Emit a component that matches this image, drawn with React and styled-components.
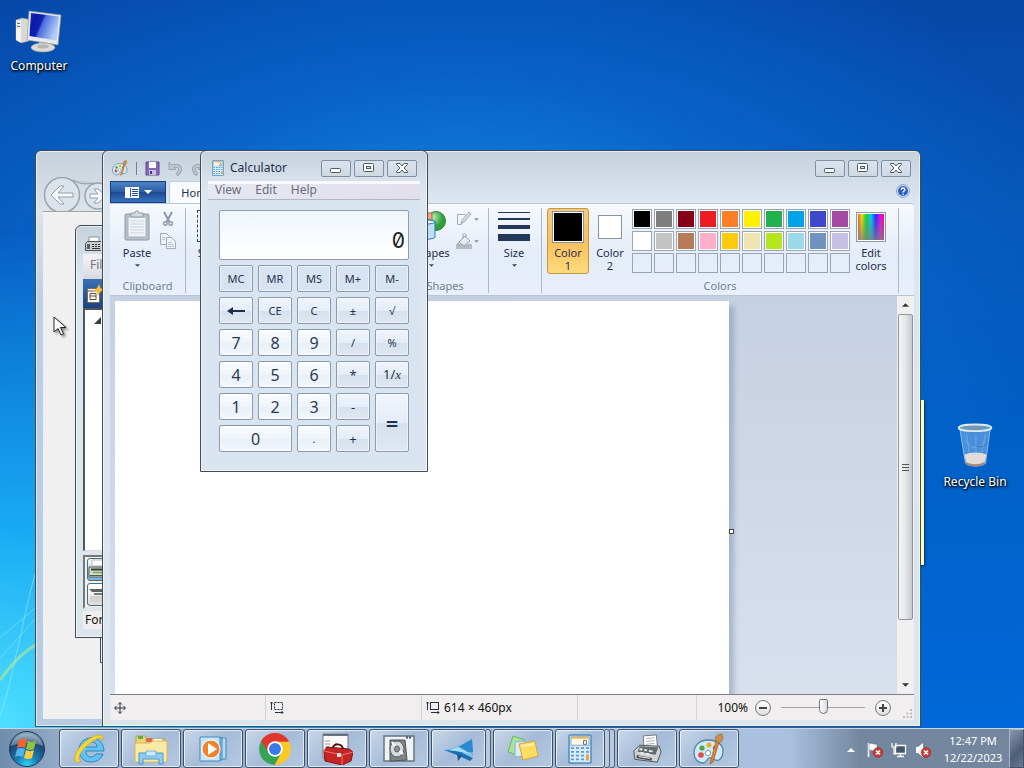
import React from 'react';
import styled, { createGlobalStyle, css } from 'styled-components';

const GlobalStyle = createGlobalStyle`
  * {
    box-sizing: border-box;
  }

  body {
    margin: 0;
    overflow: hidden;
    font-family: 'Noto Sans', 'Open Sans', sans-serif;
    font-size: 11px;
    line-height: 14px;
    color: #1e2f4b;
  }

  button, input {
    padding: 0;
    border: 0;
    background: none;
    color: inherit;
    font: inherit;
  }

  svg {
    display: block;
    flex: none;
  }
`;

const PALETTE = [
  '#000000', '#7f7f7f', '#880015', '#ed1c24', '#ff7f27', '#fff200', '#22b14c', '#00a2e8', '#3f48cc', '#a349a4',
  '#ffffff', '#c3c3c3', '#b97a57', '#ffaec9', '#ffc90e', '#efe4b0', '#b5e61d', '#99d9ea', '#7092be', '#c8bfe7',
  '', '', '', '', '', '', '', '', '', '',
];

const CALC_KEYS = [
  { label: 'MC', kind: 'memory' },
  { label: 'MR', kind: 'memory' },
  { label: 'MS', kind: 'memory' },
  { label: 'M+', kind: 'memory' },
  { label: 'M-', kind: 'memory' },
  { label: '←', kind: 'back' },
  { label: 'CE', kind: 'op' },
  { label: 'C', kind: 'op' },
  { label: '±', kind: 'op' },
  { label: '√', kind: 'op' },
  { label: '7', kind: 'digit' },
  { label: '8', kind: 'digit' },
  { label: '9', kind: 'digit' },
  { label: '/', kind: 'op' },
  { label: '%', kind: 'op' },
  { label: '4', kind: 'digit' },
  { label: '5', kind: 'digit' },
  { label: '6', kind: 'digit' },
  { label: '*', kind: 'sign' },
  { label: '1/x', kind: 'inverse' },
  { label: '1', kind: 'digit' },
  { label: '2', kind: 'digit' },
  { label: '3', kind: 'digit' },
  { label: '-', kind: 'sign' },
  { label: '=', kind: 'equals' },
  { label: '0', kind: 'digit', wide: true },
  { label: '.', kind: 'point' },
  { label: '+', kind: 'sign' },
];

/* ---------- icons ---------- */

function ComputerIcon() {
  return (
    <svg width="48" height="44" viewBox="0 0 48 44">
      <defs>
        <linearGradient id="screen" x1="0" y1="0" x2="1" y2="0.4">
          <stop offset="0" stopColor="#2438d0" />
          <stop offset="0.2" stopColor="#0a18a8" />
          <stop offset="0.45" stopColor="#0f22b4" />
          <stop offset="0.52" stopColor="#4a6ce0" />
          <stop offset="1" stopColor="#b4cdf6" />
        </linearGradient>
      </defs>
      <path d="M1 11l6-2 10 2v20l-10 3-6-3z" fill="#d9dad6" stroke="#8d9299" strokeWidth=".6" />
      <path d="M1 11l5 1v22l-5-3z" fill="#f4f3ee" />
      <path d="M2 14l3 .6M2 17l3 .6" stroke="#555" strokeWidth="1" />
      <path d="M14 2l32 4-3 30-31-5z" fill="#e6e8ea" stroke="#8f979f" strokeWidth=".7" />
      <path d="M16 4l28 3.500-2.500 24-27-4.500z" fill="url(#screen)" />
      <path d="M24 33l9 1v4h-9z" fill="#c3c5c3" />
      <ellipse cx="28" cy="38.500" rx="12" ry="4.500" fill="#dddbd4" stroke="#9a9a96" strokeWidth=".6" />
      <ellipse cx="28" cy="37.500" rx="6" ry="2" fill="#b4b6b4" />
    </svg>
  );
}

function BinIcon() {
  return (
    <svg width="38" height="46" viewBox="0 0 38 48">
      <path d="M3 5l6 37c4 4 17 4 21 0l5-37z" fill="#8fc0f2" fillOpacity=".5" stroke="#b9d8f5" strokeOpacity=".7" />
      <path d="M8 33c6-3 18-3 23 0l-2 9c-4 3-15 3-19 0z" fill="#e2dcd9" />
      <path d="M8.500 40c5 4 17 4 21 0l-1 3c-5 3-14 3-19 0z" fill="#a58673" />
      <path d="M10 11l3 20M20 12v20M30 11l-4 20M8 18l9 8 13-4" stroke="#cfe4fa" strokeOpacity=".3" fill="none" />
      <path d="M20 24c6 2 10-1 13-4" stroke="#2f62a8" strokeOpacity=".7" fill="none" />
      <ellipse cx="19" cy="5" rx="17" ry="3.500" fill="#6f97b8" stroke="#dbeaf2" strokeWidth="2" />
    </svg>
  );
}

function PaletteIcon({ size = 16 }) {
  return (
    <svg width={size} height={size} viewBox="0 0 32 32">
      <path d="M15 7C6 7 1 13 1 20c0 6 4 10 9 10 4 0 3-4 6-5 4-1 6 4 10 2 3-2 4-5 4-9 0-7-7-11-15-11z" fill="#d3e8f7" stroke="#4e84a8" strokeWidth="1.300" />
      <circle cx="8" cy="22" r="2.800" fill="#e54b3c" />
      <circle cx="9" cy="15" r="2.600" fill="#4aa848" />
      <circle cx="16" cy="12" r="2.600" fill="#e7b42c" />
      <circle cx="22" cy="15" r="2.200" fill="#3d7ed2" />
      <circle cx="15" cy="20" r="2.600" fill="#fff" stroke="#6ba0bd" />
      <path d="M26 9l-6 20-3 2 1-4 5-19z" fill="#e6842c" stroke="#a55912" strokeWidth=".7" />
      <path d="M23 8c-2-4 1-7 6-7 2 4 0 8-3 9z" fill="#c98f4d" stroke="#8d6330" strokeWidth=".6" />
    </svg>
  );
}

function SaveIcon() {
  return (
    <svg width="15" height="15" viewBox="0 0 15 15">
      <path d="M1 1h13v13H1z" fill="#8469b4" stroke="#5b4690" />
      <path d="M4 1h7v6H4z" fill="#fff" />
      <path d="M4 9h7v5H4z" fill="#c8bfe0" />
      <path d="M5 10h2v3H5z" fill="#473568" />
    </svg>
  );
}

function UndoIcon({ flip }) {
  return (
    <svg width="15" height="15" viewBox="0 0 15 15">
      <g transform={flip ? 'matrix(-1 0 0 1 15 0)' : undefined}>
        <path d="M4 5.500c5-2 8.500 0 8 3.500-.3 2-1.500 3.500-3.500 4.500" fill="none" stroke="#8f9ba6" strokeWidth="3.600" />
        <path d="M1 1v7.500h7z" fill="#c0c9d1" stroke="#8f9ba6" strokeWidth=".8" />
        <path d="M4 5.500c5-2 8.500 0 8 3.500-.3 2-1.500 3.300-3.200 4.200" fill="none" stroke="#c0c9d1" strokeWidth="2" />
      </g>
    </svg>
  );
}

function MenuPageIcon() {
  return (
    <svg width="14" height="11" viewBox="0 0 14 11">
      <path d="M0 0h14v11H0z" fill="#fff" />
      <path d="M5.500 1v9" stroke="#2a5b9f" />
      <path d="M7 2.500h6M7 4.500h6M7 6.500h6M7 8.500h6" stroke="#1f4c88" />
    </svg>
  );
}

function Triangle({ color = '#33455f', size = 5, up }) {
  return (
    <svg width={size} height={Math.ceil(size / 2)} viewBox="0 0 6 3">
      <path d={up ? 'M0 3h6L3 0z' : 'M0 0h6L3 3z'} fill={color} />
    </svg>
  );
}

function ClipboardIcon() {
  return (
    <svg width="26" height="32" viewBox="0 0 26 32">
      <rect x="1" y="4" width="24" height="26" rx="1" fill="#b7c0ca" stroke="#8f9aa6" />
      <path d="M4 7h18v20H4z" fill="#f0f4f8" stroke="#a6b1bc" />
      <path d="M6 11h14M6 14h14M6 17h14M6 20h14M6 23h14" stroke="#c9d4df" />
      <path d="M7 3h4c0-3 4-3 4 0h4v4H7z" fill="#d3dae1" stroke="#8f9aa6" />
    </svg>
  );
}

function ScissorsIcon() {
  return (
    <svg width="12" height="16" viewBox="0 0 12 16" fill="none" stroke="#8d99a6" strokeWidth="1.400">
      <path d="M2 1l5.500 10M10 1L4.500 11" strokeWidth="2" />
      <circle cx="3.300" cy="12.500" r="1.800" />
      <circle cx="8.700" cy="12.500" r="1.800" />
    </svg>
  );
}

function CopyIcon() {
  return (
    <svg width="16" height="16" viewBox="0 0 16 16" fill="#eef2f7" stroke="#a0acb9">
      <path d="M.5.500h6l3 3v8h-9z" />
      <path d="M6.500 4.500h5l4 4v7h-9z" />
      <path d="M8 9.500h4M8 11.500h6M8 13.500h6M2 4.500h3M2 6.500h3" stroke="#bcc7d3" />
    </svg>
  );
}

function ShapesIcon() {
  return (
    <svg width="32" height="32" viewBox="0 0 32 32">
      <defs>
        <radialGradient id="ball" cx=".35" cy=".3">
          <stop offset="0" stopColor="#b9f0b0" />
          <stop offset="1" stopColor="#2f9e3a" />
        </radialGradient>
      </defs>
      <circle cx="21" cy="11" r="9.500" fill="url(#ball)" stroke="#2c8437" />
      <path d="M3 3h14v12H3z" fill="#f0a583" stroke="#b9694a" />
      <path d="M2 12c0-3 18-3 18 0v15c0 3-18 3-18 0z" fill="#bcdff8" stroke="#2a79bd" />
      <ellipse cx="11" cy="12" rx="9" ry="2" fill="#eef8ff" stroke="#2a79bd" />
    </svg>
  );
}

function OutlineIcon() {
  return (
    <svg width="16" height="16" viewBox="0 0 16 16" fill="none" stroke="#a1adb9">
      <path d="M1.500 3.500h8M1.500 3.500v10h4" />
      <path d="M5 13l1-4 7-8 2 2-7 8z" fill="#d4dbe2" />
    </svg>
  );
}

function FillIcon() {
  return (
    <svg width="16" height="16" viewBox="0 0 16 16">
      <path d="M0 11h16v5H0z" fill="#b2bcc6" />
      <path d="M3 9l6-6 5 5-6 5z" fill="#e6ebf0" stroke="#97a3af" />
      <path d="M7 5V2c0-2 3-2 3 0v3" fill="none" stroke="#97a3af" />
      <path d="M3 9c-2 1-2 4-1 4s1-2 1-4z" fill="#97a3af" />
    </svg>
  );
}

function HelpIcon() {
  return (
    <svg width="14" height="14" viewBox="0 0 14 14">
      <circle cx="7" cy="7" r="6.400" fill="#dce8f8" stroke="#6c8cc0" strokeWidth=".8" />
      <circle cx="7" cy="7" r="5" fill="#2b5fc4" />
      <path d="M5.200 5.700c0-2.300 3.700-2.300 3.700 0C8.900 7 7.100 6.800 7.100 8.400" fill="none" stroke="#fff" strokeWidth="1.300" />
      <circle cx="7.100" cy="10.200" r=".8" fill="#fff" />
    </svg>
  );
}

function CalcIcon({ width = 12, height = 16 }) {
  return (
    <svg width={width} height={height} viewBox="0 0 24 32" preserveAspectRatio="none">
      <rect x="1" y="1" width="22" height="30" rx="1" fill="#d8ebfa" stroke="#4f8dc1" strokeWidth="1.500" />
      <path d="M3 3h18v9H3z" fill="#fffbea" stroke="#7fa8c6" />
      <path d="M3 3h18v2H3z" fill="#f1b44a" />
      <path d="M15.500 7h3v4h-3z" fill="none" stroke="#5a6e82" />
      {[14, 18, 22, 26].map((y) => (
        <path key={y} d={`M3 ${y}h3v2H3zM8 ${y}h3v2H8zM13 ${y}h3v2h-3zM18 ${y}h3v2h-3z`} fill="#5b9ad3" />
      ))}
      <path d="M18 22h3v6h-3z" fill="#eaa63d" />
    </svg>
  );
}

function WindowGlyph({ type }) {
  return (
    <svg width="16" height="12" viewBox="0 0 16 12" fill="#fff" stroke="#4b5866">
      {type === 'min' && <rect x="2.500" y="6.500" width="10" height="4" rx="1" />}
      {type === 'max' && (
        <>
          <rect x="2.500" y="1.500" width="10" height="8" rx="1" />
          <rect x="5.500" y="4.500" width="4" height="2" fill="#dbe4ee" />
        </>
      )}
      {type === 'close' && (
        <path d="M2.500 1.500h3.500L8 4l2-2.500h3.500v1L10 6l3.500 3.500v1H10L8 8l-2 2.500H2.500v-1L6 6 2.500 2.500z" />
      )}
    </svg>
  );
}

function NavArrows() {
  return (
    <svg width="66" height="36" viewBox="0 0 66 36" fill="none" stroke="#939ca6">
      <path d="M30 3c8 5 12 4 28 3" fill="#c3ccd5" />
      <circle cx="19" cy="18" r="17.500" fill="#dce4eb" stroke="#9ba4ad" strokeWidth="1.500" />
      <circle cx="55" cy="19" r="13" fill="#dce4eb" stroke="#9ba4ad" strokeWidth="1.500" />
      <path d="M8 18l9-9h4l-6 7h15v4H15l6 7h-4z" fill="#f7fafc" />
      <path d="M47 17h8l-4-5h4l8 7-8 7h-4l4-5h-8z" fill="#f7fafc" />
    </svg>
  );
}

function FaxIcon({ size = 16 }) {
  return (
    <svg width={size} height={size} viewBox="0 0 32 32">
      <path d="M12 2l14-1 1 12-14 4z" fill="#fff" stroke="#777" />
      <path d="M15 5l9-1M15 8l9-1M15 11l9-1" stroke="#aaa" />
      <path d="M2 18l6-6 21 1 2 6-4 11-24-3z" fill="#cfd3d3" stroke="#4b4f52" />
      <path d="M8 13l20 1-3 8-19-3z" fill="#646a6e" />
      <path d="M8 16l3 .5M13 17l3 .5M18 18l4 .5M9 20l4 1M15 21l4 1" stroke="#e8eeee" strokeWidth="2" />
      <path d="M5 24l16 3" stroke="#454a4d" strokeWidth="3" />
      <path d="M7 24l12 2" stroke="#fff" />
    </svg>
  );
}

function FaxTitleIcon() {
  return (
    <svg width="16" height="16" viewBox="0 0 16 16">
      <path d="M4 1h10v6H4z" fill="#fff" stroke="#8a8f94" />
      <path d="M.5 7.500l2-2h14v9H.5z" fill="#c9cdcf" stroke="#4a4f54" />
      <path d="M2 8h3v5H2z" fill="#5a6064" />
      <path d="M7 8.500h2M10 8.500h2M13 8.500h2M7 10.500h2M10 10.500h2M13 10.500h2M7 12.500h8" stroke="#33383c" strokeWidth="1.200" />
    </svg>
  );
}

function FaxModeIcon() {
  return (
    <svg width="20" height="22" viewBox="0 0 20 22">
      <path d="M4 1h16v6H4z" fill="#fff" stroke="#bbb" />
      <path d="M1 8h19v10H1z" fill="#d7dcc9" stroke="#52585a" />
      <path d="M3 10.500h16" stroke="#333c3a" strokeWidth="2" />
      <path d="M5 13.500h14" stroke="#7fa84f" strokeWidth="1.500" />
      <path d="M2 16.500h17" stroke="#4c5a55" />
    </svg>
  );
}

function NewFaxIcon() {
  return (
    <svg width="18" height="20" viewBox="0 0 18 20">
      <path d="M1.500 4.500h12v14h-12z" fill="#fffdf7" stroke="#7e6c56" />
      <path d="M4 9.500h6v6H4zM4 12h6M2 7h8" fill="none" stroke="#5d4a40" />
      <path d="M13 0l1.500 4L18 6l-4 2-2 4-1-4-4-1 4-3z" fill="#f5bd3a" />
    </svg>
  );
}

function MoveIcon() {
  return (
    <svg width="12" height="12" viewBox="0 0 12 12" fill="none" stroke="#26323f">
      <path d="M6 1v10M1 6h10M4 2.500L6 .5l2 2M4 9.500l2 2 2-2M2.500 4l-2 2 2 2M9.500 4l2 2-2 2" />
    </svg>
  );
}

function SizeStatusIcon({ dashed }) {
  return (
    <svg width="14" height="13" viewBox="0 0 14 13" fill="none" stroke="#26323f">
      <path d="M1.500 9V1M0 2.500L1.500 1 3 2.500M5 11.500h8M11.500 10l1.500 1.500-1.500 1.500" />
      <rect x="4.500" y="1.500" width="8" height="7" strokeDasharray={dashed ? '2 1' : undefined} />
    </svg>
  );
}

function CursorIcon() {
  return (
    <svg width="14" height="20" viewBox="0 0 14 20">
      <path d="M1 1v15l4-3.500L8 19l2.500-1.200-3-6.300H13z" fill="#fff" stroke="#222" strokeLinejoin="round" />
    </svg>
  );
}

function StartOrb() {
  return (
    <svg width="38" height="38" viewBox="0 0 38 38">
      <defs>
        <radialGradient id="orb" cx=".5" cy=".95" r=".9">
          <stop offset="0" stopColor="#2fd4f4" />
          <stop offset=".35" stopColor="#1b79b4" />
          <stop offset=".75" stopColor="#1c456f" />
          <stop offset="1" stopColor="#7e9cb8" />
        </radialGradient>
      </defs>
      <circle cx="19" cy="19" r="17.500" fill="url(#orb)" stroke="#1f3c58" />
      <path d="M3 16a16.500 16.500 0 0132 0c-9-4-22-4-32 0z" fill="#fff" fillOpacity=".3" />
      <path d="M11 10c3-2 6-1 8 0l-2 8c-3-1.500-5-1.500-8 0z" fill="#f0652e" />
      <path d="M20 11c3 1.500 5 1.500 8 0l-2 8c-3 1.500-5 1-8 0z" fill="#8cc63e" />
      <path d="M9 19c3-1.500 5-1.500 8 0l-2 8c-3-1.500-5-1.500-8 0z" fill="#4fb4ea" />
      <path d="M18 20c3 1.500 5 1.500 8 0l-2 8c-3 1.500-5 1-8 0z" fill="#fccc3c" />
    </svg>
  );
}

function BrowserIcon() {
  return (
    <svg width="32" height="32" viewBox="0 0 32 32">
      <path d="M30 21c-2 6-7 8-12 8C11 29 6 24 6 17S11 5 18 5s13 5 13 13H13c0 4 2 6 5 6 2 0 4-1 5-3zM13 14h11c0-3-2-5-5.500-5S13 11 13 14z" fill="#62c3f0" stroke="#1878b5" strokeWidth=".8" fillRule="evenodd" />
      <path d="M3 29C-1 26 4 15 13 8S30 0 30 5c0 1-1 3-1 3 0-3-3-4-7-1C14 11 6 20 6 25c0 2 1 3 2 3-2 1-4 2-5 1z" fill="#f7d43b" stroke="#ca9c16" strokeWidth=".6" />
    </svg>
  );
}

function FolderIcon() {
  return (
    <svg width="34" height="32" viewBox="0 0 34 32">
      <path d="M2 3h9l2 3h18v22H2z" fill="#f0d27a" stroke="#c29f43" />
      <path d="M4 3h5v3H4z" fill="#5bac4b" />
      <path d="M12 5h6v4h-6z" fill="#dd6a4b" />
      <path d="M20 6h8v5h-8z" fill="#fff" />
      <path d="M1 10h15l3-2h14v21H1z" fill="#fbeaa6" stroke="#d8b75f" />
      <path d="M5 20h24v11h-4v-5H9v5H5z" fill="#90cdf0" stroke="#4899cb" />
      <path d="M12 18h10v5H12z" fill="#c8eafb" stroke="#4899cb" strokeWidth=".6" />
    </svg>
  );
}

function MediaIcon() {
  return (
    <svg width="28" height="28" viewBox="0 0 28 28">
      <path d="M8 3h19v21H8z" fill="#b9dcf5" stroke="#4387be" />
      <path d="M5 3h18v22H5z" fill="#8fc3eb" stroke="#4387be" />
      <path d="M1 2h20v24H1z" fill="#c9e5f8" stroke="#4387be" />
      <circle cx="12" cy="14" r="9" fill="#f0822c" stroke="#fff" />
      <path d="M9 8l9 6-9 6z" fill="#fff" />
    </svg>
  );
}

function ChromeIcon() {
  return (
    <svg width="32" height="32" viewBox="0 0 32 32">
      <path d="M16 16L2.200 8A16 16 0 0129.800 8z" fill="#e0382c" />
      <path d="M16 16l13.800-8A16 16 0 0116 32z" fill="#fbc926" />
      <path d="M16 16v16A16 16 0 012.200 8z" fill="#35a352" />
      <path d="M16 8.500h14L22.500 20z" fill="#fbc926" />
      <path d="M9.500 20L2.200 8 16 8.500z" fill="#35a352" />
      <path d="M2.200 8L9.500 20C8 15 11 8.500 16 8.500h14A16 16 0 002.200 8z" fill="#e0382c" />
      <path d="M22.500 19.800L15.500 32H16l-7-12z" fill="#35a352" />
      <circle cx="16" cy="16" r="7.700" fill="#fff" />
      <circle cx="16" cy="16" r="6" fill="#3b78e7" />
    </svg>
  );
}

function ToolboxIcon() {
  return (
    <svg width="32" height="32" viewBox="0 0 32 32">
      <path d="M2 1h25v24H2z" fill="#fafafa" stroke="#777" />
      <path d="M2 1h25v2H2z" fill="#66727d" />
      <path d="M4 8h5M4 11h5M4 14h4" stroke="#999" />
      <path d="M3 18l3-4 22 2 4 3-2 9-9 4L4 28z" fill="#c62525" stroke="#831313" />
      <path d="M3 18l18 4 11-3M21 22v10" fill="none" stroke="#f07467" />
      <path d="M12 15c0-5 9-5 10 1" fill="none" stroke="#4a1010" strokeWidth="2" />
      <path d="M16 20h4v4h-4z" fill="#ddd" />
    </svg>
  );
}

function DiskIcon() {
  return (
    <svg width="32" height="28" viewBox="0 0 32 28">
      <path d="M1 1h30v25H1z" fill="#f0f3f6" stroke="#687480" strokeWidth="1.500" />
      <path d="M23 2.500h2M26 2.500h2" stroke="#44506a" strokeWidth="2" />
      <path d="M7 5h15l2 20-17 1z" fill="#7d8486" stroke="#4f5558" />
      <ellipse cx="14" cy="14" rx="7" ry="8" fill="#d7dbdc" stroke="#555b5e" />
      <path d="M14 14L9 7M14 14l6 5" stroke="#fff" strokeWidth="2" />
      <ellipse cx="14" cy="14" rx="2.500" ry="3" fill="#8e9598" stroke="#5a6063" />
    </svg>
  );
}

function BirdIcon() {
  return (
    <svg width="32" height="28" viewBox="0 0 32 28">
      <path d="M1 15l14-3L29 4l1 17-15-4z" fill="#63b6ed" />
      <path d="M15 12L29 4l1 13-12 1z" fill="#2b8ad2" />
      <path d="M1 15l14 1 15 7-3 3-13-6z" fill="#1c6fb4" />
      <path d="M6 15l10-3 14 8-12-3z" fill="#a6dcfa" />
      <path d="M14 19l5 2-4 5z" fill="#165997" />
    </svg>
  );
}

function NotesIcon() {
  return (
    <svg width="32" height="28" viewBox="0 0 32 28">
      <path d="M6 1l12 4-5 16-12-4z" fill="#a8e39a" stroke="#6cb45d" />
      <path d="M8 7l10-1 2 15-12 1z" fill="#d9ecfb" stroke="#8cb0cd" />
      <path d="M12 9l16-3 3 15-15 4z" fill="#ffdc62" stroke="#d9a63a" />
      <path d="M14 11l13-2" stroke="#fff0ae" strokeWidth="2" />
    </svg>
  );
}

function TrayFlag() {
  return (
    <svg width="16" height="16" viewBox="0 0 16 16">
      <path d="M1.500 1v14" stroke="#fff" strokeWidth="1.500" />
      <path d="M2 2c3-2 4 1 8 0v7c-4 1-5-2-8 0z" fill="#fff" stroke="#5b6775" strokeWidth=".5" />
      <circle cx="11" cy="10.500" r="4.800" fill="#d23a35" stroke="#8a2222" strokeWidth=".6" />
      <path d="M9 8.500l4 4M13 8.500l-4 4" stroke="#fff" strokeWidth="1.500" />
    </svg>
  );
}

function TrayNetwork() {
  return (
    <svg width="16" height="16" viewBox="0 0 16 16">
      <path d="M4.500 3.500h10v8h-10z" fill="#45576a" stroke="#fff" strokeWidth="1.300" />
      <path d="M9.500 12v2M6 14.500h7" stroke="#fff" strokeWidth="1.500" />
      <path d="M1 1v4h4V1M3 5v7h2" fill="none" stroke="#fff" strokeWidth="1.200" />
    </svg>
  );
}

function TraySound() {
  return (
    <svg width="16" height="16" viewBox="0 0 16 16">
      <path d="M1 5h2l5-4v14l-5-4H1z" fill="#fff" />
      <circle cx="11" cy="10.500" r="4.800" fill="#d23a35" stroke="#8a2222" strokeWidth=".6" />
      <path d="M9 8.500l4 4M13 8.500l-4 4" stroke="#fff" strokeWidth="1.500" />
    </svg>
  );
}

/* ---------- desktop ---------- */

function Shortcut({ label, children, ...rest }) {
  return (
    <Styled.Shortcut {...rest}>
      {children}
      {label}
    </Styled.Shortcut>
  );
}

function WindowButtons() {
  return (
    <Styled.WindowButtons>
      <Styled.WindowButton aria-label="Minimize"><WindowGlyph type="min" /></Styled.WindowButton>
      <Styled.WindowButton aria-label="Maximize"><WindowGlyph type="max" /></Styled.WindowButton>
      <Styled.WindowButton aria-label="Close"><WindowGlyph type="close" /></Styled.WindowButton>
    </Styled.WindowButtons>
  );
}

function BrowserWindow() {
  return (
    <Styled.BrowserWindow>
      <Styled.BrowserNav><NavArrows /></Styled.BrowserNav>
      <Styled.BrowserPage />
    </Styled.BrowserWindow>
  );
}

function FaxWindow() {
  return (
    <Styled.FaxWindow>
      <Styled.FaxTitle><FaxTitleIcon /></Styled.FaxTitle>
      <Styled.FaxMenu>File</Styled.FaxMenu>
      <Styled.FaxToolbar><NewFaxIcon /></Styled.FaxToolbar>
      <Styled.FaxTree>
        <svg width="7" height="7" viewBox="0 0 7 7"><path d="M7 0v7H0z" fill="#3b3b3b" /></svg>
      </Styled.FaxTree>
      <Styled.FaxModes>
        <Styled.FaxMode $active aria-label="Fax"><FaxModeIcon /></Styled.FaxMode>
        <Styled.FaxMode aria-label="Scan">
          <svg width="20" height="18" viewBox="0 0 20 18">
            <path d="M1 3h19v3H4z" fill="#5d6466" />
            <path d="M2 10h18v6H2z" fill="#d3d3cf" />
            <path d="M6 8h14" stroke="#777" strokeWidth="2" />
          </svg>
        </Styled.FaxMode>
      </Styled.FaxModes>
      <Styled.FaxStatus>For Help</Styled.FaxStatus>
    </Styled.FaxWindow>
  );
}

function PaintRibbon() {
  return (
    <Styled.Ribbon>
      <Styled.Group $width={76}>
        <Styled.GroupBody>
          <Styled.BigButton $width={44}>
            <ClipboardIcon />
            <span>Paste</span>
            <Triangle />
          </Styled.BigButton>
          <Styled.SmallColumn>
            <ScissorsIcon />
            <CopyIcon />
          </Styled.SmallColumn>
        </Styled.GroupBody>
        <Styled.GroupLabel>Clipboard</Styled.GroupLabel>
      </Styled.Group>
      <Styled.Group $width={216}>
        <Styled.GroupBody>
          <Styled.BigButton $width={44}>
            <Styled.Marquee />
            <span>Select</span>
          </Styled.BigButton>
        </Styled.GroupBody>
      </Styled.Group>
      <Styled.Group $width={87}>
        <Styled.GroupBody>
          <Styled.BigButton $width={48}>
            <ShapesIcon />
            <span>Shapes</span>
            <Triangle />
          </Styled.BigButton>
          <Styled.SmallColumn>
            <Styled.MenuIcon><OutlineIcon /><Triangle color="#8794a2" /></Styled.MenuIcon>
            <Styled.MenuIcon><FillIcon /><Triangle color="#8794a2" /></Styled.MenuIcon>
          </Styled.SmallColumn>
        </Styled.GroupBody>
        <Styled.GroupLabel>Shapes</Styled.GroupLabel>
      </Styled.Group>
      <Styled.Group $width={53}>
        <Styled.GroupBody>
          <Styled.BigButton $width={40}>
            <Styled.Lines><i /><i /><i /><i /></Styled.Lines>
            <span>Size</span>
            <Triangle />
          </Styled.BigButton>
        </Styled.GroupBody>
      </Styled.Group>
      <Styled.Group $width={357}>
        <Styled.GroupBody>
          <Styled.ColorButton $active>
            <Styled.ColorBox $size={32} $color="#000" />
            <span>Color<br />1</span>
          </Styled.ColorButton>
          <Styled.ColorButton>
            <Styled.ColorBox $size={24} $color="#fff" />
            <span>Color<br />2</span>
          </Styled.ColorButton>
          <Styled.Palette>
            {PALETTE.map((color, i) => (
              <Styled.Swatch key={i} $color={color} aria-label={color || 'Custom color'} />
            ))}
          </Styled.Palette>
          <Styled.ColorButton>
            <Styled.Spectrum />
            <span>Edit<br />colors</span>
          </Styled.ColorButton>
        </Styled.GroupBody>
        <Styled.GroupLabel>Colors</Styled.GroupLabel>
      </Styled.Group>
    </Styled.Ribbon>
  );
}

function PaintWindow() {
  return (
    <Styled.PaintWindow>
      <Styled.PaintTitle>
        <PaletteIcon />
        <Styled.Divider />
        <SaveIcon />
        <UndoIcon />
        <UndoIcon flip />
        <WindowButtons />
      </Styled.PaintTitle>
      <Styled.Tabs>
        <Styled.FileTab aria-label="Paint menu">
          <MenuPageIcon />
          <Triangle color="#fff" size={8} />
        </Styled.FileTab>
        <Styled.Tab>Home</Styled.Tab>
        <Styled.HelpButton aria-label="Help"><HelpIcon /></Styled.HelpButton>
      </Styled.Tabs>
      <PaintRibbon />
      <Styled.Workspace>
        <Styled.Canvas>
          <Styled.Paper />
          <Styled.Handle />
        </Styled.Canvas>
        <Styled.Scrollbar>
          <Styled.ScrollArrow aria-label="Scroll up"><Triangle color="#333" size={7} up /></Styled.ScrollArrow>
          <Styled.ScrollThumb><i /><i /><i /></Styled.ScrollThumb>
          <Styled.ScrollArrow aria-label="Scroll down"><Triangle color="#333" size={7} /></Styled.ScrollArrow>
        </Styled.Scrollbar>
      </Styled.Workspace>
      <Styled.StatusBar>
        <Styled.StatusCell $width={156}><MoveIcon /></Styled.StatusCell>
        <Styled.StatusCell $width={156}><SizeStatusIcon dashed /></Styled.StatusCell>
        <Styled.StatusCell $width={156}><SizeStatusIcon />614 × 460px</Styled.StatusCell>
        <Styled.StatusCell />
        <Styled.ZoomBar>
          <label htmlFor="zoom">100%</label>
          <Styled.ZoomButton aria-label="Zoom out">
            <svg width="8" height="8" viewBox="0 0 8 8"><path d="M0 4h8" stroke="#444" strokeWidth="2" /></svg>
          </Styled.ZoomButton>
          <Styled.Slider id="zoom" type="range" min="0" max="100" defaultValue="50" />
          <Styled.ZoomButton aria-label="Zoom in">
            <svg width="8" height="8" viewBox="0 0 8 8"><path d="M0 4h8M4 0v8" stroke="#444" strokeWidth="2" /></svg>
          </Styled.ZoomButton>
          <Styled.Grip width="9" height="9" viewBox="0 0 9 9">
            <path d="M7 0h2v2H7zM7 3.500h2v2H7zM3.500 3.500h2v2h-2zM7 7h2v2H7zM3.500 7h2v2h-2zM0 7h2v2H0z" fill="#bdbdbd" />
          </Styled.Grip>
        </Styled.ZoomBar>
      </Styled.StatusBar>
    </Styled.PaintWindow>
  );
}

function CalcKey({ item }) {
  const { label, kind, wide } = item;
  let face = label;

  if (kind === 'back') {
    face = (
      <svg width="18" height="10" viewBox="0 0 18 10">
        <path d="M0 5l6-4v3h12v2H6v3z" fill="#1e2f4b" />
      </svg>
    );
  }
  if (kind === 'inverse') {
    face = <span>1/<em>x</em></span>;
  }

  return (
    <Styled.Key $kind={kind} $wide={wide} aria-label={kind === 'back' ? 'Backspace' : undefined}>
      {face}
    </Styled.Key>
  );
}

function CalculatorWindow() {
  return (
    <Styled.CalcWindow>
      <Styled.CalcTitle>
        <CalcIcon />
        <span>Calculator</span>
        <WindowButtons />
      </Styled.CalcTitle>
      <Styled.CalcMenu>
        <button>View</button>
        <button>Edit</button>
        <button>Help</button>
      </Styled.CalcMenu>
      <Styled.CalcBody>
        <Styled.Display aria-label="Result" readOnly value="0" />
        <Styled.Keys>
          {CALC_KEYS.map((item) => <CalcKey key={item.label} item={item} />)}
        </Styled.Keys>
      </Styled.CalcBody>
    </Styled.CalcWindow>
  );
}

function Taskbar() {
  return (
    <Styled.Taskbar>
      <Styled.StartButton aria-label="Start"><StartOrb /></Styled.StartButton>
      <Styled.Tasks>
        <Styled.Task aria-label="Internet Explorer"><BrowserIcon /></Styled.Task>
        <Styled.Task aria-label="Explorer"><FolderIcon /></Styled.Task>
        <Styled.Task aria-label="Media Player"><MediaIcon /></Styled.Task>
        <Styled.Task aria-label="Chrome"><ChromeIcon /></Styled.Task>
        <Styled.Task aria-label="Toolbox"><ToolboxIcon /></Styled.Task>
        <Styled.Task aria-label="Disk image"><DiskIcon /></Styled.Task>
        <Styled.Stack>
          <Styled.Task aria-label="Messenger"><BirdIcon /></Styled.Task>
          <Styled.StackEdge />
        </Styled.Stack>
        <Styled.Task aria-label="Sticky Notes"><NotesIcon /></Styled.Task>
        <Styled.Stack>
          <Styled.Task aria-label="Calculator"><CalcIcon width={24} height={30} /></Styled.Task>
          <Styled.StackEdge />
          <Styled.StackEdge />
        </Styled.Stack>
        <Styled.Task aria-label="Fax and Scan"><FaxIcon size={30} /></Styled.Task>
        <Styled.Task aria-label="Paint"><PaletteIcon size={32} /></Styled.Task>
      </Styled.Tasks>
      <Styled.Tray>
        <Triangle color="#fff" size={8} up />
        <TrayFlag />
        <TrayNetwork />
        <TraySound />
      </Styled.Tray>
      <Styled.Clock>
        <span>12:47 PM</span>
        <span>12/22/2023</span>
      </Styled.Clock>
      <Styled.ShowDesktop aria-label="Show desktop" />
    </Styled.Taskbar>
  );
}

function App() {
  return (
    <Styled.Screen>
      <GlobalStyle />
      <Styled.Desktop>
        <Styled.Rays viewBox="0 0 40 240" width="40" height="240">
          <path d="M0 228C14 190 26 110 40 70" stroke="#a5f4ff" strokeOpacity=".5" fill="none" />
          <path d="M0 150l40-34M0 170l40-44" stroke="#a5f4ff" strokeOpacity=".45" fill="none" />
          <path d="M0 192C16 170 28 160 40 155" stroke="#b8e986" strokeWidth="3" strokeOpacity=".6" fill="none" />
        </Styled.Rays>
        <Shortcut label="Computer" $left={0} $top={9}><ComputerIcon /></Shortcut>
        <Shortcut label="Recycle Bin" $right={10} $top={423}><BinIcon /></Shortcut>
        <BrowserWindow />
        <Styled.BackWindow />
        <FaxWindow />
        <Styled.StickyNote />
        <PaintWindow />
        <CalculatorWindow />
        <Styled.Cursor><CursorIcon /></Styled.Cursor>
      </Styled.Desktop>
      <Taskbar />
    </Styled.Screen>
  );
}

const frame = css`
  position: absolute;
  display: flex;
  flex-direction: column;
  border: 1px solid #3f4a56;
  border-radius: 6px 6px 0 0;
  background: linear-gradient(#c5d1dc, #dce6f0 50px, #dbe5ee);
  box-shadow: inset 0 0 0 1px rgba(255, 255, 255, 0.6);
  overflow: hidden;
`;

const Styled = {
  Screen: styled.div`
    display: flex;
    flex-direction: column;
    height: 100vh;
  `,

  Desktop: styled.main`
    position: relative;
    flex: 1;
    min-height: 0;
    overflow: hidden;
    background:
      radial-gradient(ellipse 50% 68% at 0% 100%, #4fe0ff 0%, rgba(28, 178, 248, 0.9) 40%, rgba(0, 110, 220, 0) 100%),
      radial-gradient(ellipse 60% 50% at 45% 35%, #1288e4 0%, rgba(10, 110, 215, 0.6) 50%, rgba(0, 90, 190, 0) 100%),
      linear-gradient(#0548a8 0%, #0656b6 30%, #0060c6 60%, #0068da 100%);
  `,

  Rays: styled.svg`
    position: absolute;
    left: 0;
    bottom: 0;
  `,

  Shortcut: styled.button`
    position: absolute;
    top: ${({ $top }) => $top}px;
    ${({ $left }) => $left !== undefined && `left: ${$left}px;`}
    ${({ $right }) => $right !== undefined && `right: ${$right}px;`}
    display: flex;
    flex-direction: column;
    align-items: center;
    gap: 6px;
    width: 78px;
    font-size: 12px;
    color: #fff;
    text-shadow: 1px 1px 2px #000, 0 1px 3px #000;
  `,

  BrowserWindow: styled.section`
    ${frame}
    top: 150px;
    left: 35px;
    right: 120px;
    bottom: 1px;
    padding: 0 7px 7px;
    background: linear-gradient(#c5d1dc, #dce4ea 60px, #bccfe8 150px, #b8cbe4);
  `,

  BrowserNav: styled.div`
    height: 61px;
    padding: 26px 0 0;
    border-bottom: 1px solid #9da5ad;
    overflow: hidden;
  `,

  BrowserPage: styled.div`
    flex: 1;
    background: #f0f0f0;
  `,

  BackWindow: styled.div`
    ${frame}
    top: 300px;
    left: 100px;
    width: 300px;
    height: 363px;
  `,

  FaxWindow: styled.section`
    ${frame}
    top: 225px;
    left: 75px;
    width: 500px;
    height: 413px;
    padding: 0 8px 8px 7px;
    font-size: 12px;
  `,

  FaxTitle: styled.header`
    display: flex;
    align-items: end;
    height: 28px;
    padding: 0 0 2px 2px;
  `,

  FaxMenu: styled.div`
    height: 25px;
    padding: 4px 7px;
    background: linear-gradient(#f4f4f8, #d8d8e2);
    color: #777;
  `,

  FaxToolbar: styled.div`
    display: flex;
    align-items: center;
    height: 29px;
    padding: 0 3px;
    background: linear-gradient(#3b6fb4, #1b4285);
  `,

  FaxTree: styled.div`
    flex: 1;
    padding: 7px 9px;
    border: 2px solid #555;
    border-right: 0;
    border-bottom: 1px solid #ddd;
    background: #fff;
  `,

  FaxModes: styled.div`
    display: flex;
    flex-direction: column;
    gap: 2px;
    height: 54px;
    margin: 4px 0 2px;
    padding: 1px 2px;
    border: 2px solid #777;
    border-bottom-color: #e4e4e4;
    background: #f0f0f0;
  `,

  FaxMode: styled.button`
    height: 23px;
    border: 1px solid #44707f;
    border-radius: 3px;
    background: ${({ $active }) => ($active ? 'linear-gradient(#fff, #6fb4dc)' : 'linear-gradient(#fff, #dcdcdc)')};
    overflow: hidden;
  `,

  FaxStatus: styled.footer`
    height: 18px;
    padding: 2px;
    background: #f0eeee;
    color: #111;
  `,

  StickyNote: styled.div`
    position: absolute;
    top: 400px;
    right: 100px;
    width: 160px;
    height: 165px;
    background: #fdfcb4;
    box-shadow: 1px 1px 2px rgba(0, 0, 0, 0.5);
  `,

  PaintWindow: styled.section`
    ${frame}
    top: 150px;
    left: 102px;
    right: 103px;
    bottom: 1px;
    padding: 0 6px 6px 7px;
  `,

  PaintTitle: styled.header`
    display: flex;
    align-items: center;
    gap: 8px;
    height: 30px;
    padding: 4px 3px 0 2px;
  `,

  Divider: styled.span`
    width: 1px;
    height: 13px;
    background: #75808c;
  `,

  WindowButtons: styled.div`
    display: flex;
    gap: 3px;
    margin-left: auto;
  `,

  WindowButton: styled.button`
    display: flex;
    align-items: center;
    justify-content: center;
    width: 30px;
    height: 17px;
    border: 1px solid #8190a0;
    border-radius: 2px;
    background: linear-gradient(#dbe3ec, #ced9e4);
  `,

  Tabs: styled.nav`
    display: flex;
    height: 22px;
  `,

  FileTab: styled.button`
    display: flex;
    align-items: center;
    justify-content: center;
    gap: 5px;
    width: 56px;
    border: 1px solid #163f80;
    background: linear-gradient(#4d84c4, #2a5ca4 50%, #1c4890 51%, #3574c0);
  `,

  Tab: styled.button`
    width: 56px;
    margin-left: 3px;
    border: 1px solid #c2cede;
    border-bottom: 0;
    border-radius: 3px 3px 0 0;
    background: #f8fbff;
  `,

  HelpButton: styled.button`
    margin: 0 4px 3px auto;
  `,

  Ribbon: styled.div`
    display: flex;
    height: 93px;
    padding: 4px 0 2px;
    border: 1px solid #b8c6d8;
    border-width: 1px 0;
    border-radius: 0 3px 0 0;
    background: linear-gradient(#f6f9fd, #e4ecf8 60%, #e9f0fb);
  `,

  Group: styled.div`
    display: flex;
    flex-direction: column;
    flex: none;
    width: ${({ $width }) => $width}px;
    border-right: 1px solid #aab8c8;
  `,

  GroupBody: styled.div`
    display: flex;
    align-items: flex-start;
    flex: 1;
    padding-left: 5px;
  `,

  GroupLabel: styled.div`
    color: #717f90;
    text-align: center;
  `,

  BigButton: styled.button`
    display: flex;
    flex-direction: column;
    align-items: center;
    gap: 4px;
    width: ${({ $width }) => $width}px;
    padding-top: 2px;
  `,

  SmallColumn: styled.div`
    display: flex;
    flex-direction: column;
    align-items: center;
    gap: 6px;
    padding: 3px 1px;
  `,

  MenuIcon: styled.span`
    display: flex;
    align-items: center;
    gap: 2px;
  `,

  Marquee: styled.span`
    width: 32px;
    height: 32px;
    border: 1px dashed #33455f;
  `,

  Lines: styled.span`
    display: flex;
    flex-direction: column;
    gap: 5px;
    width: 32px;
    height: 32px;
    padding-top: 2px;

    i {
      height: 1px;
      background: #22375a;
    }

    i:nth-child(2) {
      height: 2px;
    }

    i:nth-child(3) {
      height: 4px;
    }

    i:nth-child(4) {
      height: 7px;
    }
  `,

  ColorButton: styled.button`
    display: flex;
    flex-direction: column;
    align-items: center;
    justify-content: space-between;
    width: 42px;
    height: 66px;
    padding: 2px 0 1px;
    border: 1px solid transparent;
    border-radius: 3px;
    line-height: 13px;
    ${({ $active }) => $active && `
      border-color: #c29b3c;
      background: linear-gradient(#f8c981, #fac05c 50%, #fdda7e);
    `}
  `,

  ColorBox: styled.span`
    width: ${({ $size }) => $size}px;
    height: ${({ $size }) => $size}px;
    margin: ${({ $size }) => (32 - $size) / 2}px 0;
    border: 1px solid #8793a0;
    background: ${({ $color }) => $color};
    box-shadow: inset 0 0 0 1px #fff;
  `,

  Palette: styled.div`
    display: grid;
    grid-template-columns: repeat(10, 20px);
    gap: 2px;
    padding: 1px 0 0 1px;
  `,

  Swatch: styled.button`
    height: 20px;
    border: 1px solid #99a5b2;
    background: ${({ $color }) => $color || 'transparent'};
    ${({ $color }) => $color && 'box-shadow: inset 0 0 0 1px #fff;'}
  `,

  Spectrum: styled.span`
    width: 30px;
    height: 30px;
    margin-top: 1px;
    border: 1px solid #8c97a3;
    background:
      linear-gradient(rgba(128, 128, 128, 0), rgba(128, 128, 128, 0.8)),
      linear-gradient(90deg, #f33, #fd0, #0d3, #0cf, #22f, #e0f, #f04);
    box-shadow: inset 0 0 0 1px #fff;
  `,

  Workspace: styled.div`
    display: flex;
    flex: 1;
    min-height: 0;
  `,

  Canvas: styled.div`
    display: flex;
    flex: 1;
    align-items: flex-start;
    padding: 5px 5px 0;
    background: linear-gradient(#c5d0e2, #d7e0ed);
    overflow: hidden;
  `,

  Paper: styled.div`
    width: 614px;
    height: 460px;
    background: #fff;
    box-shadow: 5px 5px 5px rgba(90, 110, 145, 0.35);
  `,

  Handle: styled.span`
    width: 5px;
    height: 5px;
    margin-top: 228px;
    border: 1px solid #444;
    background: #fff;
  `,

  Scrollbar: styled.div`
    display: flex;
    flex-direction: column;
    width: 17px;
    background: #f0f0f0;
  `,

  ScrollArrow: styled.button`
    display: flex;
    align-items: center;
    justify-content: center;
    height: 18px;
  `,

  ScrollThumb: styled.div`
    display: flex;
    flex-direction: column;
    align-items: center;
    justify-content: center;
    gap: 2px;
    height: 77%;
    margin: 0 1px auto;
    border: 1px solid #92969b;
    border-radius: 2px;
    background: linear-gradient(90deg, #f6f6f6, #e6e6e8 50%, #c6c8cb);

    i {
      width: 7px;
      height: 1px;
      background: #555;
    }
  `,

  StatusBar: styled.footer`
    display: flex;
    height: 26px;
    border-top: 1px solid #7c7f85;
    background: #f0eeee;
    font-size: 12px;
    color: #111;
  `,

  StatusCell: styled.div`
    display: flex;
    align-items: center;
    gap: 4px;
    ${({ $width }) => ($width ? `width: ${$width}px;` : 'flex: 1;')}
    padding-left: 4px;
    border-right: 1px solid #d4d2d4;
  `,

  ZoomBar: styled.div`
    display: flex;
    align-items: center;
    gap: 7px;
    padding-left: 20px;
  `,

  ZoomButton: styled.button`
    display: flex;
    align-items: center;
    justify-content: center;
    width: 16px;
    height: 16px;
    border: 1px solid #777;
    border-radius: 50%;
    background: linear-gradient(#fff, #dedede);
  `,

  Slider: styled.input`
    width: 84px;
    height: 16px;
    margin: 0 3px;
    appearance: none;

    &::-webkit-slider-runnable-track {
      height: 1px;
      background: #a5a5a5;
    }

    &::-webkit-slider-thumb {
      appearance: none;
      width: 9px;
      height: 15px;
      margin-top: -8px;
      border: 1px solid #6f757b;
      border-radius: 2px 2px 5px 5px;
      background: linear-gradient(90deg, #fff, #d8dadc);
    }
  `,

  Grip: styled.svg`
    align-self: flex-end;
    margin: 0 2px 2px 5px;
  `,

  CalcWindow: styled.section`
    ${frame}
    top: 150px;
    left: 200px;
    width: 228px;
    padding: 0 7px 8px;
    background: linear-gradient(#c5d1dc, #dce6f0 40px, #dbe5ee);
  `,

  CalcTitle: styled.header`
    display: flex;
    align-items: center;
    gap: 6px;
    height: 30px;
    padding: 4px 3px 0 4px;
    font-size: 12px;
  `,

  CalcMenu: styled.nav`
    display: flex;
    gap: 14px;
    height: 19px;
    padding: 0 7px 3px;
    border-top: 3px solid #f7f9fc;
    border-bottom: 1px solid #b3b7c4;
    background: linear-gradient(90deg, #e4e8f2, #e2dfea);
    color: #6d6d78;
    font-size: 12px;
    line-height: 12px;
  `,

  CalcBody: styled.div`
    display: flex;
    flex-direction: column;
    gap: 5px;
    padding: 10px 11px 11px;
    background: #d9e4f1;
  `,

  Display: styled.input`
    width: 100%;
    height: 50px;
    padding: 10px 3px 0;
    border: 1px solid #8e9cad;
    border-radius: 2px;
    background: linear-gradient(#eff5fd, #fff);
    color: #1e1e1e;
    font-family: Inter, 'DejaVu Sans Mono', sans-serif;
    font-feature-settings: 'zero';
    font-size: 21px;
    text-align: right;
  `,

  Keys: styled.div`
    display: grid;
    grid-template-columns: repeat(5, 1fr);
    grid-auto-rows: 27px;
    gap: 5px;
  `,

  Key: styled.button`
    display: flex;
    align-items: center;
    justify-content: center;
    border: 1px solid #8a9bb0;
    border-radius: 2px;
    background: linear-gradient(#f0f5fc, #e4edf8 50%, #d5e0ec 51%, #dfe8f2);
    box-shadow: inset 0 0 0 1px rgba(255, 255, 255, 0.5);
    color: #1e3250;
    font-size: 11px;
    ${({ $wide }) => $wide && 'grid-column: span 2;'}
    ${({ $kind }) => $kind === 'memory' && `
      background: #d7e3f1;
    `}
    ${({ $kind }) => ($kind === 'digit' || $kind === 'point') && `
      background: linear-gradient(#fbfdff, #eef4fb 50%, #e8eff8 51%, #f3f8fd);
    `}
    ${({ $kind }) => $kind === 'digit' && `
      color: #2c3a50;
      font-size: 16px;
    `}
    ${({ $kind }) => ($kind === 'sign' || $kind === 'inverse') && `
      font-size: 13px;
    `}
    ${({ $kind }) => $kind === 'equals' && `
      grid-row: span 2;
      font-size: 22px;
      font-weight: 600;
    `}

    em {
      font-family: 'Liberation Serif', serif;
    }
  `,

  Cursor: styled.div`
    position: absolute;
    top: 316px;
    left: 53px;
    filter: drop-shadow(2px 2px 1px rgba(0, 0, 0, 0.4));
  `,

  Taskbar: styled.footer`
    display: flex;
    height: 40px;
    border-top: 1px solid #c9d6e4;
    background: linear-gradient(90deg, #6f8cac 0, #93abc8 60px, #a9c0de 740px, #a9c0de 790px, #73879f 860px, #73869e);
    box-shadow: 0 -1px 0 #1c2a3a;
  `,

  StartButton: styled.button`
    width: 59px;
    padding-left: 8px;
  `,

  Tasks: styled.div`
    display: flex;
    flex: 1;
    gap: 2px;
  `,

  Task: styled.button`
    display: flex;
    align-items: center;
    justify-content: center;
    width: 60px;
    height: 39px;
    border: 1px solid #3d4f66;
    border-radius: 3px;
    background: linear-gradient(135deg, #c9d8ea, #a5bbd8 50%, #b5c9e1);
    box-shadow: inset 0 0 0 1px rgba(255, 255, 255, 0.65);
  `,

  Stack: styled.div`
    display: flex;
    width: 60px;

    ${() => Styled.Task} {
      flex: 1;
    }
  `,

  StackEdge: styled.span`
    width: 5px;
    border: 1px solid #4d5f77;
    border-left: 0;
    border-radius: 0 3px 3px 0;
    background: #b9cadf;
  `,

  Tray: styled.div`
    display: flex;
    align-items: center;
    gap: 8px;
    padding-top: 2px;

    svg:first-child {
      margin-right: 4px;
    }
  `,

  Clock: styled.time`
    display: flex;
    flex-direction: column;
    justify-content: center;
    gap: 3px;
    width: 78px;
    padding: 2px 0 0 6px;
    font-size: 11px;
    text-align: center;
    color: #fff;
  `,

  ShowDesktop: styled.button`
    width: 15px;
    border: 1px solid #a9b6c5;
    border-color: #a9b6c5 #44536a #44536a #a9b6c5;
    background: linear-gradient(135deg, #8798ae, #4c5e76 60%, #6b7c93);
  `,
};

export default App;
